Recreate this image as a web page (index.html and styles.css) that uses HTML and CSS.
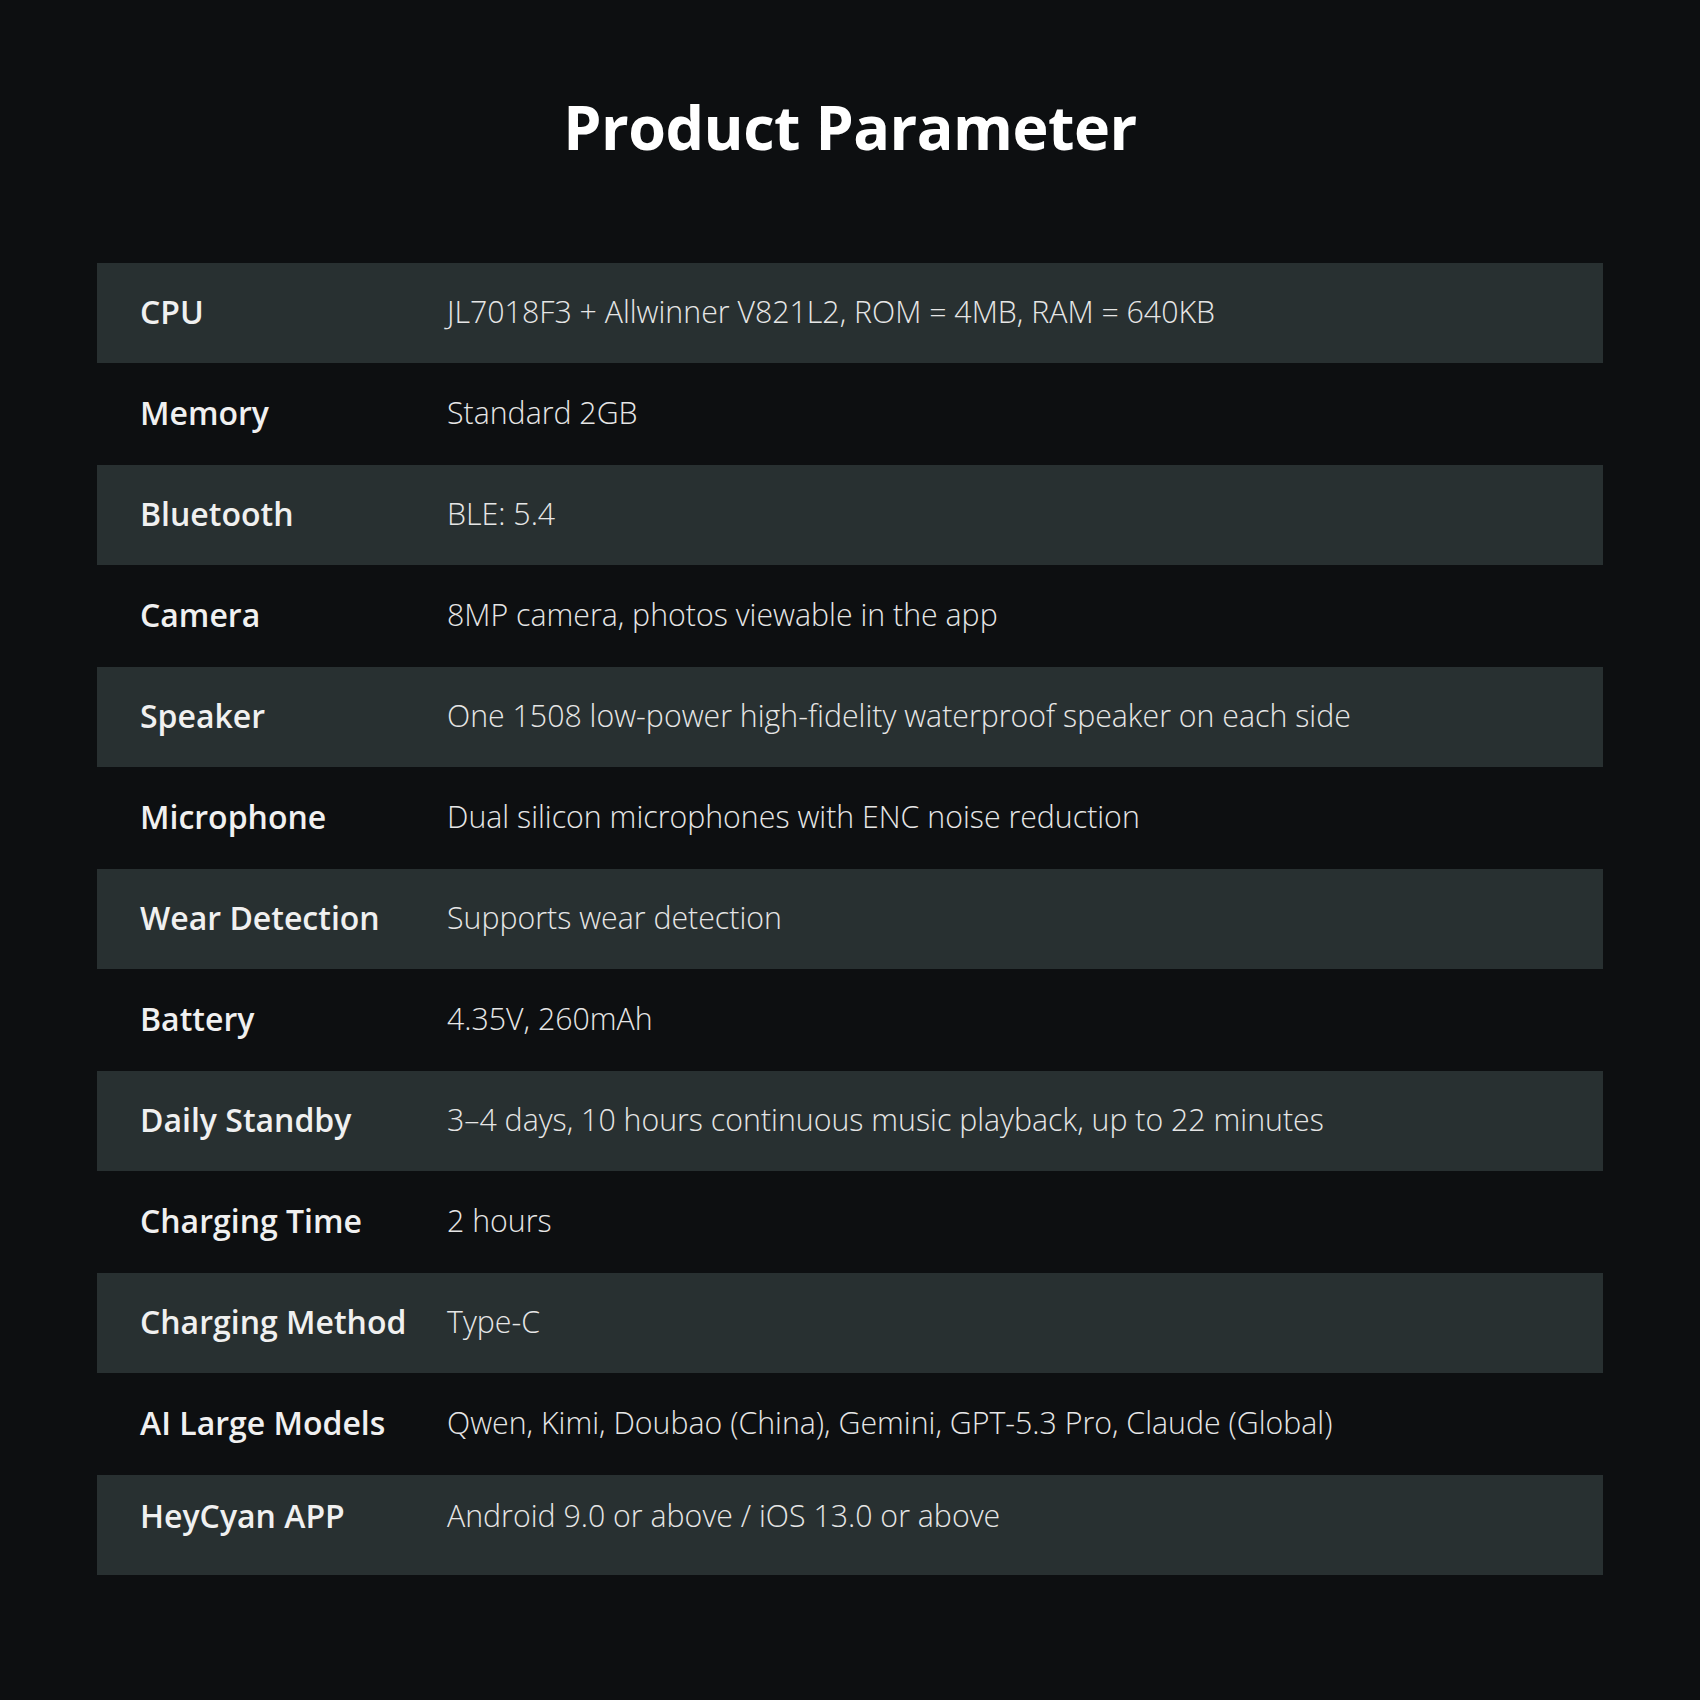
FILE: index.html
```html
<!DOCTYPE html>
<html lang="en">
<head>
    <meta charset="UTF-8">
    <meta name="viewport" content="width=device-width, initial-scale=1.0">
    <title>Product Parameter</title>
    <link rel="stylesheet" href="styles.css">
</head>
<body>
    <main class="params">
        <h1 class="params__title">Product Parameter</h1>

        <div class="params__table">
            <div class="params__row params__row--shade">
                <span class="params__label">CPU</span>
                <span class="params__value">JL7018F3 + Allwinner V821L2, ROM = 4MB, RAM = 640KB</span>
            </div>
            <div class="params__row">
                <span class="params__label">Memory</span>
                <span class="params__value">Standard 2GB</span>
            </div>
            <div class="params__row params__row--shade">
                <span class="params__label">Bluetooth</span>
                <span class="params__value">BLE: 5.4</span>
            </div>
            <div class="params__row">
                <span class="params__label">Camera</span>
                <span class="params__value">8MP camera, photos viewable in the app</span>
            </div>
            <div class="params__row params__row--shade">
                <span class="params__label">Speaker</span>
                <span class="params__value">One 1508 low-power high-fidelity waterproof speaker on each side</span>
            </div>
            <div class="params__row">
                <span class="params__label">Microphone</span>
                <span class="params__value">Dual silicon microphones with ENC noise reduction</span>
            </div>
            <div class="params__row params__row--shade">
                <span class="params__label">Wear Detection</span>
                <span class="params__value">Supports wear detection</span>
            </div>
            <div class="params__row">
                <span class="params__label">Battery</span>
                <span class="params__value">4.35V, 260mAh</span>
            </div>
            <div class="params__row params__row--shade">
                <span class="params__label">Daily Standby</span>
                <span class="params__value">3–4 days, 10 hours continuous music playback, up to 22 minutes</span>
            </div>
            <div class="params__row">
                <span class="params__label">Charging Time</span>
                <span class="params__value">2 hours</span>
            </div>
            <div class="params__row params__row--shade">
                <span class="params__label">Charging Method</span>
                <span class="params__value">Type-C</span>
            </div>
            <div class="params__row">
                <span class="params__label">AI Large Models</span>
                <span class="params__value">Qwen, Kimi, Doubao (China), Gemini, GPT-5.3 Pro, Claude (Global)</span>
            </div>
            <div class="params__row params__row--shade params__row--last">
                <span class="params__label">HeyCyan APP</span>
                <span class="params__value">Android 9.0 or above / iOS 13.0 or above</span>
            </div>
        </div>
    </main>
</body>
</html>
```

FILE: styles.css
```css
body {
    margin: 0;
    background: #0d0f11;
    color: #f2f2f2;
    font-family: "Open Sans", "Noto Sans", sans-serif;
}

.params {
    padding: 82px 97px 125px;
}

.params__title {
    margin: 0 0 91px;
    text-align: center;
    font-size: 61px;
    font-weight: 700;
    line-height: 90px;
    color: #ffffff;
    letter-spacing: -0.5px;
}

.params__table {
    display: flex;
    flex-direction: column;
}

.params__row {
    display: grid;
    grid-template-columns: 307px 1fr;
    align-items: center;
    height: 102px;
    padding: 0 0 4px 43px;
    box-sizing: border-box;
}

.params__row--shade {
    height: 100px;
    background: #283031;
}

/* last row text sits a little higher in the original */
.params__row--last {
    padding-bottom: 20px;
}

.params__label {
    font-size: 32px;
    font-weight: 600;
    color: #f0f0f0;
    white-space: nowrap;
}

.params__value {
    font-size: 30.3px;
    font-weight: 300;
    color: #e6e6e6;
    white-space: nowrap;
}
```
